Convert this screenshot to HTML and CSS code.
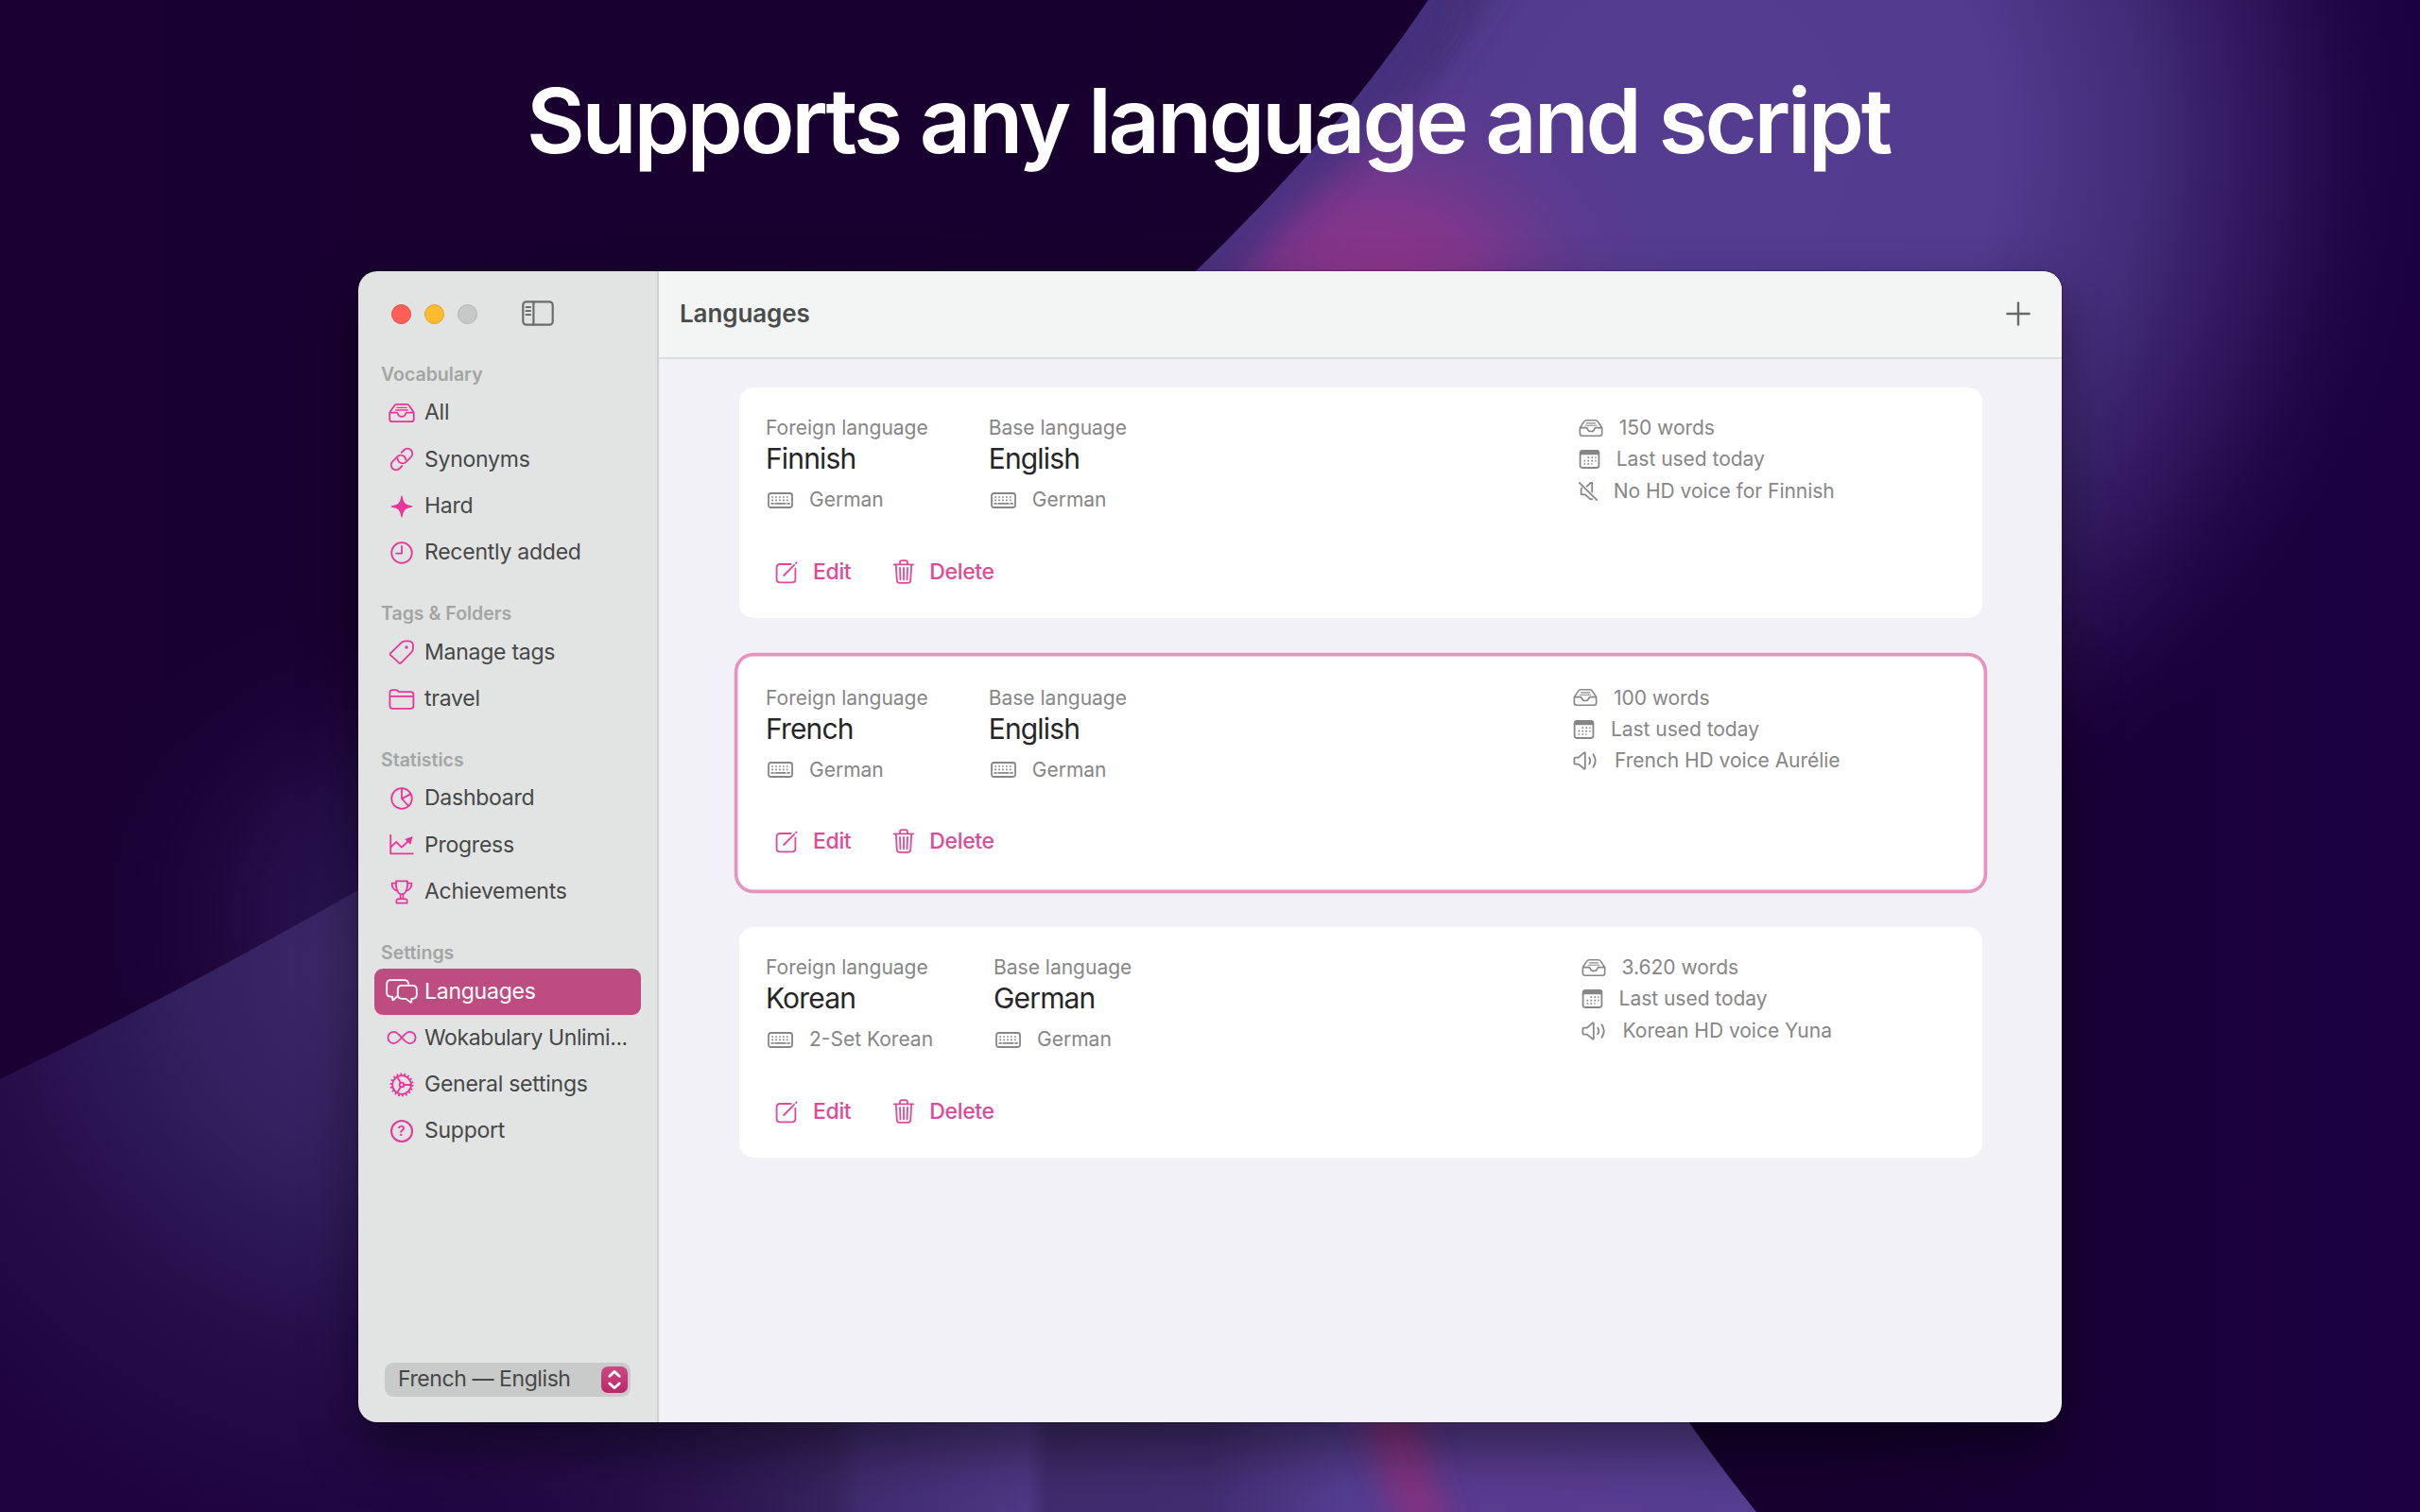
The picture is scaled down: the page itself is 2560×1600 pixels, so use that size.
FILE: index.html
```html
<!DOCTYPE html>
<html lang="en">
<head>
    <meta charset="UTF-8">
    <meta name="viewport" content="width=device-width, initial-scale=1.0">
    <title>Languages</title>
    <link rel="stylesheet" href="styles.css">
</head>
<body>

    <!-- icons -->
    <svg class="sprite" width="0" height="0">
        <symbol id="tray" viewBox="0 0 28 22">
            <path d="M1.2 10.6 6 3.4Q7 1.9 8.8 1.9H19.2Q21 1.9 22 3.4L26.8 10.6V17.4Q26.8 20.1 24.1 20.1H3.9Q1.2 20.1 1.2 17.4ZM1.2 10.6H8.4Q9.7 10.6 9.9 11.9Q10.6 14.9 14 14.9T18.1 11.9Q18.3 10.6 19.6 10.6H26.8"/>
            <path class="thin" d="M9 5.3H19M7.6 8H20.4"/>
        </symbol>
        <symbol id="link" viewBox="0 0 26 26">
            <g transform="translate(13 13) rotate(-45)">
                <path d="M-4.8 5.2H-8.6A5.2 5.2 0 0 1 -8.6 -5.2H-1.2A5.2 5.2 0 0 1 2.7 3.4"/>
                <path d="M4.8 -5.2H8.6A5.2 5.2 0 0 1 8.6 5.2H1.2A5.2 5.2 0 0 1 -2.7 -3.4"/>
            </g>
        </symbol>
        <symbol id="sparkle" viewBox="0 0 24 24">
            <path class="solid" d="M12 .6C12.3 .6 12.6 .9 12.7 1.3C13.6 8 15.8 10.3 22.6 11.3Q23.4 11.5 23.4 12T22.6 12.7C15.8 13.7 13.6 16 12.7 22.7Q12.5 23.4 12 23.4T11.3 22.7C10.4 16 8.2 13.7 1.4 12.7Q.6 12.5 .6 12T1.4 11.3C8.2 10.3 10.4 8 11.3 1.3C11.4 .9 11.7 .6 12 .6Z"/>
        </symbol>
        <symbol id="clock" viewBox="0 0 24 24">
            <circle cx="12" cy="12" r="10.8"/>
            <path d="M12 5V12.6H6"/>
        </symbol>
        <symbol id="tag" viewBox="0 0 28 26">
            <path d="M2.2 14.2 13.6 3.2Q15.4 1.5 17.8 1.4L21.4 1.3Q25.9 1.7 26 6L25.9 9.6Q25.7 11.8 24.2 13.3L13.6 24.2Q12.2 25.4 10.8 24.2L2.2 16.4Q1.1 15.3 2.2 14.2Z"/>
            <circle class="solid" cx="19" cy="8" r="1.7"/>
        </symbol>
        <symbol id="folder" viewBox="0 0 28 22">
            <path d="M1.4 4.2Q1.4 1.2 4.2 1.2H7.6Q8.8 1.2 9.8 2L10.6 2.7Q11.2 3.1 12.2 3.1H23.6Q26.4 3.1 26.4 6V17.9Q26.4 20.8 23.6 20.8H4.2Q1.4 20.8 1.4 17.9ZM1.4 7.8H26.4"/>
        </symbol>
        <symbol id="pie" viewBox="0 0 24 24">
            <circle cx="12" cy="12" r="10.8"/>
            <path d="M12 1.2V12L19.2 20M12 12.4 21 7.4"/>
        </symbol>
        <symbol id="chart" viewBox="0 0 26 22">
            <path d="M1.2 .8V20.4H24.8M2 12.8 7.2 7.9 12.8 13.6 21 6"/>
            <path class="solid" d="M16.2 5 24.6 2 22.4 10.8Z"/>
        </symbol>
        <symbol id="trophy" viewBox="0 0 24 26">
            <path d="M6 1.4H18Q18.6 12.6 13.6 15.2H10.4Q5.4 12.6 6 1.4ZM6 3.6H1.6Q1.2 10.2 7.8 12M18 3.6H22.4Q22.8 10.2 16.2 12M10.6 15.4V20M13.4 15.4V20M7.8 20.4H16.2Q17.6 20.4 17.6 22V24.6H6.4V22Q6.4 20.4 7.8 20.4Z"/>
        </symbol>
        <symbol id="bubbles" viewBox="0 0 34 26">
            <path d="M12.4 18.2 8.3 22Q7.2 22.8 7.2 21.4V18.6H5.4Q1.2 18.4 1.2 14.4V5.4Q1.2 1.2 5.4 1.2H19.6Q23.8 1.2 24 5.2"/>
            <path d="M17.2 6.8H28.2Q32.8 6.8 32.8 11.2V16.6Q32.8 20.8 28.4 20.9H27.4V23.8Q27.3 25.3 26 24.4L21.4 20.9H17.2Q12.8 20.9 12.8 16.6V11.2Q12.8 6.8 17.2 6.8Z"/>
        </symbol>
        <symbol id="infinity" viewBox="0 0 32 16">
            <path d="M16 8C12.6 4.2 10.6 1.8 7.6 1.8A6.2 6.2 0 0 0 7.6 14.2C10.6 14.2 12.6 11.8 16 8C19.4 4.2 21.4 1.8 24.4 1.8A6.2 6.2 0 0 1 24.4 14.2C21.4 14.2 19.4 11.8 16 8Z"/>
        </symbol>
        <symbol id="gear" viewBox="0 0 26 26">
            <circle class="teeth" cx="13" cy="13" r="11.3"/>
            <circle cx="13" cy="13" r="9.8"/>
            <circle cx="13" cy="13" r="2.3"/>
            <path d="M15.3 13H22.6M11.9 11 8.2 4.6M11.9 15 8.2 21.4"/>
        </symbol>
        <symbol id="sidebar" viewBox="0 0 34 27">
            <rect x="1.3" y="1.3" width="31.4" height="24.4" rx="3.4"/>
            <path d="M12.4 1.3V25.7M4.6 7H9M4.6 11H9M4.6 15H9"/>
        </symbol>
        <symbol id="keyboard" viewBox="0 0 27 17">
            <rect x="1" y="1" width="25" height="15" rx="2.4"/>
            <path class="keys" d="M4.3 5H23M4.3 8.3H23"/>
            <path d="M8.2 11.9H18.8M4.2 11.9H6M21.2 11.9H23"/>
        </symbol>
        <symbol id="calendar" viewBox="0 0 23 20">
            <rect x="1.6" y="1" width="19.8" height="18" rx="2.4"/>
            <path class="solid" d="M1 5.2V3Q1 .4 4 .4H19Q22 .4 22 3V5.2Z"/>
            <path class="keys" d="M9.5 8.2H18.5M5.5 11.6H18.5M5.5 15H14.5"/>
        </symbol>
        <symbol id="speaker" viewBox="0 0 27 20">
            <path d="M2.6 6.6H5.8L11.6 1.6Q12.8 .8 12.8 2.2V17.8Q12.8 19.2 11.6 18.4L5.8 13.6H2.6Q1.4 13.6 1.4 12.4V7.8Q1.4 6.6 2.6 6.6Z"/>
            <path d="M17.2 6.6Q19.2 10 17.2 13.4M21.4 3.2Q26 10 21.4 16.8"/>
        </symbol>
        <symbol id="mute" viewBox="0 0 20 20">
            <path d="M.8 .9 19.2 19.1M8.6 4.6 12.8 1Q14.2 .4 14.2 1.8V10.6M3.2 6.4Q2.6 6.8 2.6 7.8V12.4Q2.6 13.4 3.6 13.4H7L11.6 17.6Q12.6 18.6 14.2 18.2"/>
        </symbol>
        <symbol id="edit" viewBox="0 0 24 24">
            <path d="M16.6 3H5.2Q1.6 3 1.6 6.6V18.8Q1.6 22.4 5.2 22.4H17.8Q21.4 22.4 21.4 18.8V7.6M9.2 15 20.2 3.8M22 2 22.6 1.4"/>
        </symbol>
        <symbol id="trash" viewBox="0 0 22 26">
            <path d="M.8 5.4H21.2M7 5.2V3.4Q7 1.2 9.2 1.2H12.8Q15 1.2 15 3.4V5.2M2.8 5.6 3.8 22.2Q4 24.8 6.4 24.8H15.6Q18 24.8 18.2 22.2L19.2 5.6M7 8.8 7.5 21.4M11 8.8V21.4M15 8.8 14.5 21.4"/>
        </symbol>
    </svg>

    <!-- wallpaper -->
    <svg class="wallpaper" viewBox="0 0 2560 1600" preserveAspectRatio="none">
        <defs>
            <radialGradient id="beam" gradientUnits="userSpaceOnUse" cx="1780" cy="150" r="820">
                <stop offset="0" stop-color="#543c90"/>
                <stop offset=".4" stop-color="#533b8e"/>
                <stop offset=".6" stop-color="#422b77"/>
                <stop offset=".8" stop-color="#290f52"/>
                <stop offset="1" stop-color="#1a003c" stop-opacity="0"/>
            </radialGradient>
            <linearGradient id="base" x1="0" y1="0" x2="1" y2="0">
                <stop offset="0" stop-color="#1a0033"/>
                <stop offset=".5" stop-color="#17002e"/>
                <stop offset=".75" stop-color="#17002f"/>
                <stop offset="1" stop-color="#1c0042"/>
            </linearGradient>
            <radialGradient id="left" gradientUnits="userSpaceOnUse" cx="410" cy="1020" r="620">
                <stop offset="0" stop-color="#3f2a6c"/>
                <stop offset=".35" stop-color="#33205f"/>
                <stop offset=".65" stop-color="#270f4c"/>
                <stop offset="1" stop-color="#1e0340"/>
            </radialGradient>
            <radialGradient id="haze" gradientUnits="userSpaceOnUse" cx="420" cy="970" r="360">
                <stop offset="0" stop-color="#2d1858"/>
                <stop offset=".4" stop-color="#26104c" stop-opacity=".8"/>
                <stop offset="1" stop-color="#1a0033" stop-opacity="0"/>
            </radialGradient>
            <linearGradient id="floor" gradientUnits="userSpaceOnUse" x1="400" y1="0" x2="1860" y2="0">
                <stop offset="0" stop-color="#22083f" stop-opacity="0"/>
                <stop offset=".33" stop-color="#38245f"/>
                <stop offset=".35" stop-color="#402c70"/>
                <stop offset=".47" stop-color="#4f3885"/>
                <stop offset=".485" stop-color="#402c6e"/>
                <stop offset=".6" stop-color="#422d71"/>
                <stop offset=".7" stop-color="#553e92"/>
                <stop offset=".8" stop-color="#5a3c92"/>
                <stop offset="1" stop-color="#563e92"/>
            </linearGradient>
            <radialGradient id="magenta">
                <stop offset="0" stop-color="#8e348a"/>
                <stop offset=".35" stop-color="#84368b" stop-opacity=".85"/>
                <stop offset=".7" stop-color="#6b3a8f" stop-opacity=".35"/>
                <stop offset="1" stop-color="#5a3c90" stop-opacity="0"/>
            </radialGradient>
            <filter id="soft" x="-50%" y="-50%" width="200%" height="200%"><feGaussianBlur stdDeviation="16"/></filter>
            <clipPath id="beamClip"><path d="M1511 0C1440 105 1365 190 1262 290L1100 460H2560V0Z"/></clipPath>
            <clipPath id="floorClip"><path d="M0 1400H1712L1786 1504Q1818 1550 1858 1600H0Z"/></clipPath>
        </defs>
        <rect width="2560" height="1600" fill="url(#base)"/>
        <path d="M1511 0C1440 105 1365 190 1262 290L1100 460V1100H2560V0Z" fill="url(#beam)"/>
        <g clip-path="url(#beamClip)">
            <path d="M1600 -40C1530 80 1440 180 1310 300L1200 380V260L1480 -40Z" fill="#432d72" opacity=".8" filter="url(#soft)"/>
            <ellipse cx="1455" cy="300" rx="320" ry="250" fill="url(#magenta)"/>
            <path d="M1511 -10C1440 105 1365 190 1262 290" fill="none" stroke="#453280" stroke-width="60" opacity=".8" filter="url(#soft)"/>
        </g>
        <rect y="600" width="800" height="760" fill="url(#haze)"/>
        <path d="M0 1142Q200 1045 400 930L1000 1400V1600H0Z" fill="url(#left)"/>
        <g clip-path="url(#floorClip)">
            <rect x="400" y="1400" width="1500" height="200" fill="url(#floor)"/>
            <path d="M1425 1460H1490L1540 1640H1490Z" fill="#8a327f" opacity=".85" filter="url(#soft)"/>
        </g>
    </svg>

    <h1 class="headline">Supports any language and script</h1>

    <div class="window">
        <div class="sidebar">
            <div class="controls">
                <span class="dot red"></span>
                <span class="dot yellow"></span>
                <span class="dot gray"></span>
                <svg class="icon toggle" width="34" height="27"><use href="#sidebar"/></svg>
            </div>

            <div class="group">
                <div class="group_title">Vocabulary</div>
                <div class="item"><span class="item_icon"><svg class="icon" width="28" height="22"><use href="#tray"/></svg></span>All</div>
                <div class="item"><span class="item_icon"><svg class="icon" width="26" height="26"><use href="#link"/></svg></span>Synonyms</div>
                <div class="item"><span class="item_icon"><svg class="icon" width="24" height="24"><use href="#sparkle"/></svg></span>Hard</div>
                <div class="item"><span class="item_icon"><svg class="icon" width="24" height="24"><use href="#clock"/></svg></span>Recently added</div>
            </div>

            <div class="group">
                <div class="group_title">Tags &amp; Folders</div>
                <div class="item"><span class="item_icon"><svg class="icon" width="28" height="26"><use href="#tag"/></svg></span>Manage tags</div>
                <div class="item"><span class="item_icon"><svg class="icon" width="28" height="22"><use href="#folder"/></svg></span>travel</div>
            </div>

            <div class="group">
                <div class="group_title">Statistics</div>
                <div class="item"><span class="item_icon"><svg class="icon" width="24" height="24"><use href="#pie"/></svg></span>Dashboard</div>
                <div class="item"><span class="item_icon"><svg class="icon" width="26" height="22"><use href="#chart"/></svg></span>Progress</div>
                <div class="item"><span class="item_icon"><svg class="icon" width="24" height="26"><use href="#trophy"/></svg></span>Achievements</div>
            </div>

            <div class="group">
                <div class="group_title">Settings</div>
                <div class="item active"><span class="item_icon"><svg class="icon" width="34" height="26"><use href="#bubbles"/></svg></span>Languages</div>
                <div class="item"><span class="item_icon"><svg class="icon" width="32" height="16"><use href="#infinity"/></svg></span><span class="long">Wokabulary Unlimi...</span></div>
                <div class="item"><span class="item_icon"><svg class="icon" width="26" height="26"><use href="#gear"/></svg></span>General settings</div>
                <div class="item"><span class="item_icon"><span class="help">?</span></span>Support</div>
            </div>

            <div class="picker">
                <span>French — English</span>
                <span class="picker_btn">
                    <svg width="28" height="28" viewBox="0 0 28 28"><path d="M8.8 10.2 14 5.4 19.2 10.2M8.8 18 14 22.8 19.2 18"/></svg>
                </span>
            </div>
        </div>

        <div class="main">
            <div class="toolbar">
                <span>Languages</span>
                <svg class="plus" width="26" height="26" viewBox="0 0 26 26"><path d="M13 1.4V24.6M1.4 13H24.6"/></svg>
            </div>

            <div class="cards">
                <div class="card">
                    <div class="info">
                        <div class="pair">
                            <div>
                                <div class="label">Foreign language</div>
                                <div class="name">Finnish</div>
                                <div class="keyboard"><svg class="icon" width="27" height="17"><use href="#keyboard"/></svg>German</div>
                            </div>
                            <div>
                                <div class="label">Base language</div>
                                <div class="name">English</div>
                                <div class="keyboard"><svg class="icon" width="27" height="17"><use href="#keyboard"/></svg>German</div>
                            </div>
                        </div>
                        <div class="details">
                            <div>
                                <div class="detail"><svg class="icon" width="26" height="20"><use href="#tray"/></svg>150 words</div>
                                <div class="detail"><svg class="icon" width="23" height="20"><use href="#calendar"/></svg>Last used today</div>
                                <div class="detail"><svg class="icon" width="20" height="20"><use href="#mute"/></svg>No HD voice for Finnish</div>
                            </div>
                        </div>
                    </div>
                    <div class="actions">
                        <span class="action"><svg class="icon" width="24" height="24"><use href="#edit"/></svg>Edit</span>
                        <span class="action"><svg class="icon trash" width="22" height="26"><use href="#trash"/></svg>Delete</span>
                    </div>
                </div>

                <div class="card selected">
                    <div class="info">
                        <div class="pair">
                            <div>
                                <div class="label">Foreign language</div>
                                <div class="name">French</div>
                                <div class="keyboard"><svg class="icon" width="27" height="17"><use href="#keyboard"/></svg>German</div>
                            </div>
                            <div>
                                <div class="label">Base language</div>
                                <div class="name">English</div>
                                <div class="keyboard"><svg class="icon" width="27" height="17"><use href="#keyboard"/></svg>German</div>
                            </div>
                        </div>
                        <div class="details">
                            <div>
                                <div class="detail"><svg class="icon" width="26" height="20"><use href="#tray"/></svg>100 words</div>
                                <div class="detail"><svg class="icon" width="23" height="20"><use href="#calendar"/></svg>Last used today</div>
                                <div class="detail"><svg class="icon" width="27" height="20"><use href="#speaker"/></svg>French HD voice Aurélie</div>
                            </div>
                        </div>
                    </div>
                    <div class="actions">
                        <span class="action"><svg class="icon" width="24" height="24"><use href="#edit"/></svg>Edit</span>
                        <span class="action"><svg class="icon trash" width="22" height="26"><use href="#trash"/></svg>Delete</span>
                    </div>
                </div>

                <div class="card">
                    <div class="info">
                        <div class="pair">
                            <div>
                                <div class="label">Foreign language</div>
                                <div class="name">Korean</div>
                                <div class="keyboard"><svg class="icon" width="27" height="17"><use href="#keyboard"/></svg>2-Set Korean</div>
                            </div>
                            <div>
                                <div class="label">Base language</div>
                                <div class="name">German</div>
                                <div class="keyboard"><svg class="icon" width="27" height="17"><use href="#keyboard"/></svg>German</div>
                            </div>
                        </div>
                        <div class="details">
                            <div>
                                <div class="detail"><svg class="icon" width="26" height="20"><use href="#tray"/></svg>3.620 words</div>
                                <div class="detail"><svg class="icon" width="23" height="20"><use href="#calendar"/></svg>Last used today</div>
                                <div class="detail"><svg class="icon" width="27" height="20"><use href="#speaker"/></svg>Korean HD voice Yuna</div>
                            </div>
                        </div>
                    </div>
                    <div class="actions">
                        <span class="action"><svg class="icon" width="24" height="24"><use href="#edit"/></svg>Edit</span>
                        <span class="action"><svg class="icon trash" width="22" height="26"><use href="#trash"/></svg>Delete</span>
                    </div>
                </div>
            </div>
        </div>
    </div>

</body>
</html>
```
FILE: styles.css
```css
* {
    box-sizing: border-box;
}
body {
    margin: 0;
    width: 2560px;
    height: 1600px;
    overflow: hidden;
    background: #18002f;
    font-family: Inter, "Liberation Sans", sans-serif;
}
.sprite {
    position: absolute;
}
.wallpaper {
    position: absolute;
    top: 0;
    left: 0;
    z-index: -1;
    width: 2560px;
    height: 1600px;
}
.headline {
    margin: 0;
    height: 287px;
    padding: 68px 4px 0 0;
    color: #fff;
    font-size: 95px;
    font-weight: 600;
    line-height: 120px;
    letter-spacing: -3.2px;
    text-align: center;
    white-space: nowrap;
}
.window {
    display: flex;
    width: 1802px;
    height: 1218px;
    margin-left: 379px;
    border-radius: 20px;
    overflow: hidden;
    box-shadow: 0 0 2px rgba(0, 0, 0, 0.6), 0 30px 60px rgba(0, 0, 0, 0.45);
}

/* icons */
.icon {
    flex: none;
    overflow: visible;
    fill: none;
    stroke: currentColor;
    stroke-width: 1.8;
    stroke-linecap: round;
    stroke-linejoin: round;
}
.solid {
    fill: currentColor;
    stroke: none;
}
.thin {
    stroke-width: 1.3;
}
.keys {
    stroke-width: 1.7;
    stroke-linecap: butt;
    stroke-dasharray: 1.7 2.2;
}
.teeth {
    stroke-width: 2.4;
    stroke-linecap: butt;
    stroke-dasharray: 1.7 2.25;
}
.help {
    width: 24px;
    height: 24px;
    border: 2px solid currentColor;
    border-radius: 50%;
    font-size: 15px;
    font-weight: 600;
    line-height: 20px;
    text-align: center;
}

/* sidebar */
.sidebar {
    display: flex;
    flex-direction: column;
    width: 318px;
    padding: 0 17px 27.5px 17px;
    background: #e2e4e3;
    border-right: 2px solid #cfd0d0;
    color: #464747;
}
.controls {
    display: flex;
    align-items: center;
    gap: 14px;
    height: 91.5px;
    padding-left: 18px;
}
.dot {
    width: 21px;
    height: 21px;
    border-radius: 50%;
}
.red {
    background: #fe5f57;
    border: 1px solid #e8483f;
}
.yellow {
    background: #febb2e;
    border: 1px solid #e3a126;
}
.gray {
    background: #c8c8c8;
    border: 1px solid #b2b2b2;
}
.toggle {
    margin: -2px 0 0 33px;
    color: #6b6c6c;
    stroke-width: 2.2;
}
.group {
    margin-bottom: 22.4px;
}
.group_title {
    height: 33.8px;
    padding-left: 7px;
    color: #a3a5a4;
    font-size: 19.5px;
    font-weight: 600;
    line-height: 34.8px;
}
.item {
    display: flex;
    align-items: center;
    height: 49.3px;
    padding-left: 8px;
    border-radius: 9px;
    font-size: 23px;
    letter-spacing: -0.25px;
    line-height: 49.3px;
    white-space: nowrap;
}
.item_icon {
    display: flex;
    justify-content: center;
    width: 41px;
    margin-right: 4px;
    color: #e8359a;
}
.long {
    letter-spacing: -0.4px;
}
.active {
    background: #bd4d80;
    color: #fff;
}
.active .item_icon {
    color: #fff;
}
.picker {
    display: flex;
    align-items: center;
    justify-content: space-between;
    width: 260px;
    height: 36px;
    margin: auto 0 0 11px;
    padding: 0 3px 0 14px;
    border-radius: 9px;
    background: #c9caca;
    font-size: 23px;
    letter-spacing: -0.42px;
    line-height: 32px;
}
.picker span:first-child {
    padding-bottom: 2px;
}
.picker_btn {
    display: flex;
    width: 28px;
    height: 28px;
    border-radius: 7px;
    background: linear-gradient(#cb4a85, #ba2768);
}
.picker_btn path {
    fill: none;
    stroke: #fff;
    stroke-width: 2.8;
    stroke-linecap: round;
    stroke-linejoin: round;
}

/* content */
.main {
    flex: 1;
    background: #f2f1f7;
}
.toolbar {
    display: flex;
    align-items: center;
    justify-content: space-between;
    height: 93px;
    padding: 0 33px 2px 22px;
    background: #f3f5f4;
    border-bottom: 2px solid #dcdddd;
    color: #4a4c4b;
    font-size: 26px;
    font-weight: 600;
    letter-spacing: -0.1px;
}
.plus {
    fill: none;
    stroke: #676868;
    stroke-width: 2.4;
    stroke-linecap: round;
}
.cards {
    display: flex;
    flex-direction: column;
    gap: 41.5px;
    padding: 30px 84px 0 85px;
}
.card {
    height: 244px;
    padding: 26px 28px 0;
    border-radius: 15px;
    background: #fff;
    color: #868686;
    font-size: 21px;
    line-height: 33.4px;
}
.selected {
    box-shadow: 0 0 0 1.6px #faf9fb, 0 0 0 5.2px #e693bf;
}
.info {
    display: flex;
    height: 145px;
}
.pair {
    display: flex;
    gap: 64px;
    width: 731px;
    white-space: nowrap;
}
.name {
    color: #262626;
    font-size: 30px;
    letter-spacing: -0.85px;
    line-height: 33.4px;
}
.keyboard {
    display: flex;
    align-items: center;
    gap: 17px;
    margin-top: 9.6px;
    padding-left: 2px;
}
.details {
    display: flex;
    flex: 1;
    justify-content: center;
    padding-left: 1px;
}
.detail {
    display: flex;
    align-items: center;
    gap: 16.5px;
    white-space: nowrap;
    letter-spacing: -0.03px;
}
.actions {
    display: flex;
    gap: 45px;
    padding-left: 10px;
}
.action {
    display: flex;
    align-items: center;
    gap: 16px;
    height: 49px;
    color: #dd4b97;
    font-size: 23px;
    font-weight: 500;
    letter-spacing: -0.35px;
}
.trash {
    margin-bottom: 2px;
}
```
